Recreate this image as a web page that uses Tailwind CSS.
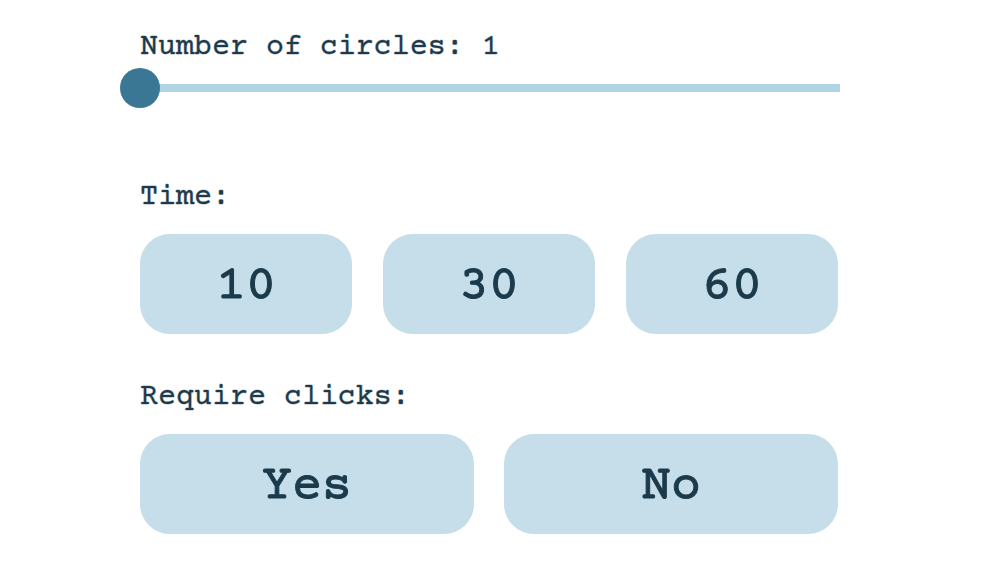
<!DOCTYPE html>
<html lang="en">
<head>
<meta charset="utf-8">
<meta name="viewport" content="width=device-width, initial-scale=1">
<title>Settings</title>
<script src="https://cdn.jsdelivr.net/npm/@tailwindcss/browser@4"></script>
</head>
<body class="bg-white text-[#1b3a4b] font-['Courier_Prime','Liberation_Mono',monospace]">
<main class="ml-[14%] w-7/10 pt-8">
  <form>
    <div>
      <label for="circles" class="block text-[30px] leading-8 [-webkit-text-stroke:1px_#1b3a4b66]">Number of circles: <output for="circles">1</output></label>
      <input id="circles" type="range" min="1" max="10" value="1" class="-ml-5 mt-1 block h-10 w-[calc(100%+40px)] cursor-pointer appearance-none bg-[linear-gradient(#b0d4e3,#b0d4e3)] bg-[length:calc(100%-40px)_8px] bg-center bg-no-repeat [&::-webkit-slider-thumb]:size-10 [&::-webkit-slider-thumb]:appearance-none [&::-webkit-slider-thumb]:rounded-full [&::-webkit-slider-thumb]:bg-[#3a7794]">
    </div>
    <fieldset class="mt-[74px]">
      <legend class="text-[30px] leading-8 [-webkit-text-stroke:1px_#1b3a4b66]">Time:</legend>
      <div class="mt-5 mr-0.5 grid grid-cols-3 gap-[31px] [-webkit-text-stroke:1px_#1b3a4b]">
        <button type="button" class="h-[100px] rounded-[30px] bg-[#c5dee9] pt-1.5 text-[50px] leading-none">10</button>
        <button type="button" class="h-[100px] rounded-[30px] bg-[#c5dee9] pt-1.5 text-[50px] leading-none">30</button>
        <button type="button" class="h-[100px] rounded-[30px] bg-[#c5dee9] pt-1.5 text-[50px] leading-none">60</button>
      </div>
    </fieldset>
    <fieldset class="mt-12">
      <legend class="text-[30px] leading-8 [-webkit-text-stroke:1px_#1b3a4b66]">Require clicks:</legend>
      <div class="mt-5 mr-0.5 grid grid-cols-2 gap-[30px] [-webkit-text-stroke:1px_#1b3a4b]">
        <button type="button" class="h-[100px] rounded-[30px] bg-[#c5dee9] pt-1.5 text-[50px] leading-none">Yes</button>
        <button type="button" class="h-[100px] rounded-[30px] bg-[#c5dee9] pt-1.5 text-[50px] leading-none">No</button>
      </div>
    </fieldset>
  </form>
</main>
</body>
</html>
